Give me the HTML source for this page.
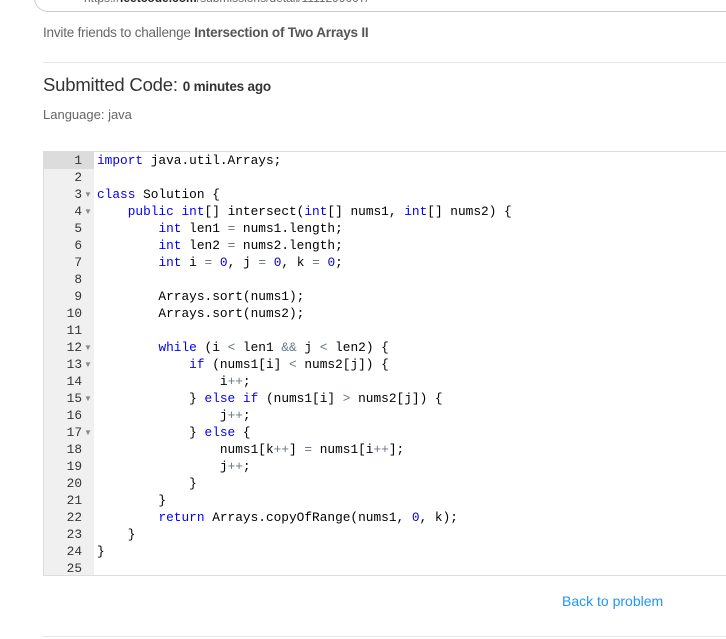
<!DOCTYPE html>
<html><head><style>
*{margin:0;padding:0;box-sizing:border-box}
body{width:726px;height:639px;overflow:hidden;background:#fff;font-family:"Liberation Sans",sans-serif;position:relative}
.abs{position:absolute}
.code{position:absolute;left:43px;top:151px;width:690px;height:425px;border:1px solid #ddd;border-right:none;background:#fff}
.gut{position:absolute;left:0;top:0;width:50px;height:100%;background:#f0f0f0}
.ln{position:absolute;left:0;width:38px;text-align:right;font:12.8px/17px "Liberation Mono",monospace;color:#333}
.fold{position:absolute;left:40px;font-size:8px;color:#888}
.cl{position:absolute;left:53px;font:12.8px/17px "Liberation Mono",monospace;color:#000;white-space:pre}
.k{color:#0000ff}.n{color:#0000cd}.o{color:#687687}
</style></head><body>
<div class="abs" style="left:34px;top:-20px;width:720px;height:32px;border:1px solid #ccc;border-radius:14px;background:#fff"></div>
<div class="abs" style="left:84px;top:-9px;font-size:12px;color:#666">https://<b style="color:#222">leetcode.com</b>/submissions/detail/1111299007/</div>
<div class="abs" style="left:43px;top:25px;font-size:13.5px;color:#666;letter-spacing:-0.2px">Invite friends to challenge <b style="color:#555">Intersection of Two Arrays II</b></div>
<div class="abs" style="left:43px;top:62px;width:683px;height:1px;background:#e6e6e6"></div>
<div class="abs" style="left:43px;top:74px;font-size:18.5px;color:#333;letter-spacing:-0.2px">Submitted Code: <span style="font-size:13.5px;font-weight:bold">0 minutes ago</span></div>
<div class="abs" style="left:43px;top:107px;font-size:13px;color:#666">Language: java</div>
<div class="code"><div class="gut"></div>
<div class="abs" style="left:0;top:0;width:50px;height:17px;background:#dcdcdc"></div>
<div id="g"></div>
</div>
<div class="abs" style="left:562px;top:593px;font-size:14px;color:#2196f3">Back to problem</div>
<div class="abs" style="left:43px;top:636px;width:683px;height:1px;background:#e6e6e6"></div>
<script>
var L=[
'<span class="k">import</span> java.util.Arrays;',
'',
'<span class="k">class</span> Solution {',
'    <span class="k">public</span> <span class="k">int</span>[] intersect(<span class="k">int</span>[] nums1, <span class="k">int</span>[] nums2) {',
'        <span class="k">int</span> len1 <span class="o">=</span> nums1.length;',
'        <span class="k">int</span> len2 <span class="o">=</span> nums2.length;',
'        <span class="k">int</span> i <span class="o">=</span> <span class="n">0</span>, j <span class="o">=</span> <span class="n">0</span>, k <span class="o">=</span> <span class="n">0</span>;',
'',
'        Arrays.sort(nums1);',
'        Arrays.sort(nums2);',
'',
'        <span class="k">while</span> (i <span class="o">&lt;</span> len1 <span class="o">&amp;&amp;</span> j <span class="o">&lt;</span> len2) {',
'            <span class="k">if</span> (nums1[i] <span class="o">&lt;</span> nums2[j]) {',
'                i<span class="o">++</span>;',
'            } <span class="k">else</span> <span class="k">if</span> (nums1[i] <span class="o">&gt;</span> nums2[j]) {',
'                j<span class="o">++</span>;',
'            } <span class="k">else</span> {',
'                nums1[k<span class="o">++</span>] <span class="o">=</span> nums1[i<span class="o">++</span>];',
'                j<span class="o">++</span>;',
'            }',
'        }',
'        <span class="k">return</span> Arrays.copyOfRange(nums1, <span class="n">0</span>, k);',
'    }',
'}',
''];
var F=[3,4,12,13,15,17],h='';
for(var i=0;i<L.length;i++){var t=i*17;
h+='<div class="ln" style="top:'+t+'px">'+(i+1)+'</div>';
if(F.indexOf(i+1)>=0)h+='<div class="fold" style="top:'+(t+4)+'px">&#9660;</div>';
h+='<div class="cl" style="top:'+t+'px">'+L[i]+'</div>';}
document.getElementById('g').innerHTML=h;
</script>
</body></html>
